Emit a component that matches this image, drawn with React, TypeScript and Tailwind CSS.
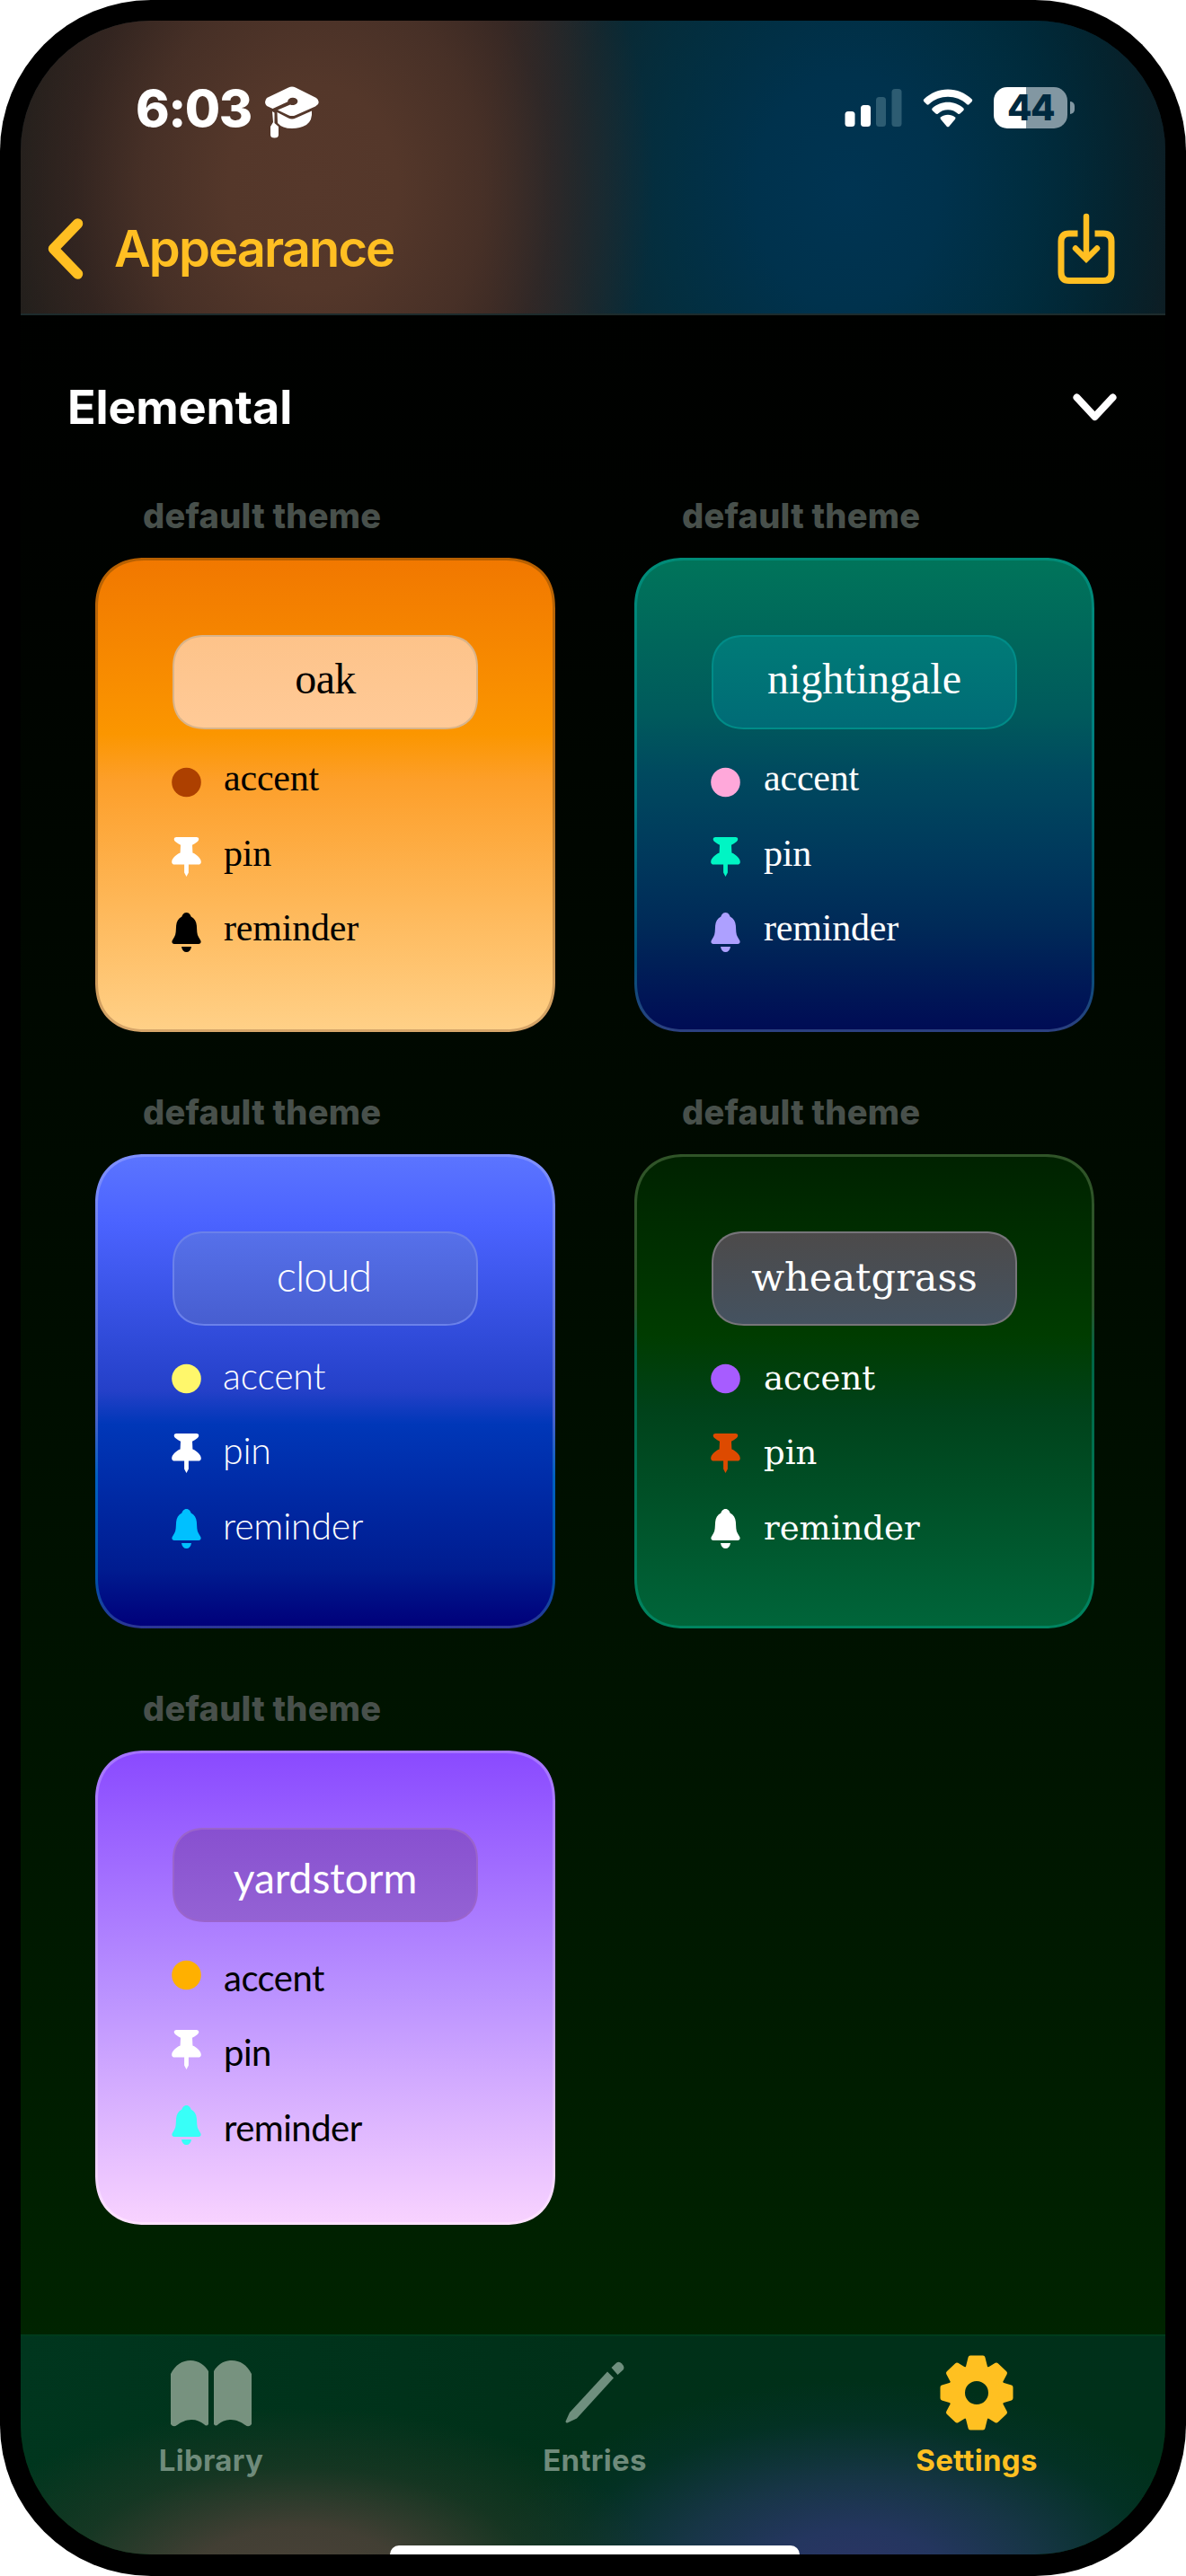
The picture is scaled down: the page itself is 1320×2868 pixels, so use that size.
import type { ReactNode } from 'react';

type Theme = {
  name: string;
  card: string;
  pill: string;
  title: string;
  row: string;
  accent: string;
  pin: string;
  bell: string;
};

const themes: Theme[] = [
  {
    name: 'oak',
    card: '[background:linear-gradient(#f17800,#fb9600_37%,#fd9f2a_47%,#ffd087)_padding-box,linear-gradient(#b86000,#b87420_50%,#d6a66a)_border-box]',
    pill: 'border-[#d9b48a] bg-linear-to-b from-[#fdc38a] to-[#ffca97]',
    title: 'font-["Liberation_Serif",serif] text-[48px] tracking-[-0.600px] text-black pb-[7px]',
    row: 'font-["Liberation_Serif",serif] text-[42px] tracking-[-0.200px] text-black pl-[25px] pb-[9px]',
    accent: 'text-[#ad4000]',
    pin: 'text-white',
    bell: 'text-black',
  },
  {
    name: 'nightingale',
    card: '[background:linear-gradient(#00745a,#005a5c_33%,#004a5f_45%,#00385c_64%,#002a58_78%,#000c55)_padding-box,linear-gradient(#008c78,#007a80_50%,#005078_85%,#2c4080)_border-box]',
    pill: 'border-[#008c88] bg-linear-to-b from-[#007b77] to-[#006b76]',
    title: 'font-["Liberation_Serif",serif] text-[48px] text-white pb-[7px]',
    row: 'font-["Liberation_Serif",serif] text-[42px] tracking-[-0.200px] text-white pl-[26px] pb-[9px]',
    accent: 'text-[#ffa8da]',
    pin: 'text-[#00f5c4]',
    bell: 'text-[#ada0ff]',
  },
  {
    name: 'cloud',
    card: '[background:linear-gradient(#5b74ff,#4b63ff_14%,#2440c8_50%,#0037b8_57%,#001c90_88%,#00007a)_padding-box,linear-gradient(#7f90ff,#4a62cc_55%,#0060c0_68%,#0050a8_90%,#2c3494)_border-box]',
    pill: 'border-[#6b81ea] bg-linear-to-b from-[#5670ea] to-[#475ed0]',
    title: 'font-[Lato,sans-serif] font-light text-[47px] tracking-[-1px] text-white pb-[7px] pr-[3px]',
    row: 'font-[Lato,sans-serif] font-light text-[41px] tracking-[-0.200px] text-white pl-[24px] pb-[6px]',
    accent: 'text-[#fff76b]',
    pin: 'text-white',
    bell: 'text-[#00c0ff]',
  },
  {
    name: 'wheatgrass',
    card: '[background:linear-gradient(#002200,#003c00_38%,#00421a_54%,#00653a)_padding-box,linear-gradient(#305428,#2a5528_32%,#006545_42%,#008460)_border-box]',
    pill: 'border-[#77757a] bg-linear-to-b from-[#4c4a4a] to-[#445260]',
    title: 'font-["DejaVu_Serif",serif] text-[43px] tracking-[0.100px] text-white pb-[3px]',
    row: 'font-["DejaVu_Serif",serif] text-[37px] text-white pl-[26px]',
    accent: 'text-[#a75cff]',
    pin: 'text-[#dd4a00]',
    bell: 'text-white',
  },
  {
    name: 'yardstorm',
    card: '[background:linear-gradient(#8a4aff,#b990ff_50%,#f8d2ff)_padding-box,linear-gradient(#a472ff,#c8a4ff_50%,#ffe2ff)_border-box]',
    pill: 'border-[#9a64cc] bg-linear-to-b from-[#8850d0] to-[#9462d4]',
    title: 'font-[Lato,sans-serif] text-[46px] text-white pt-[7px]',
    row: 'font-[Lato,sans-serif] text-[40px] tracking-[-0.500px] text-black pl-[25px] pt-[6px]',
    accent: 'text-[#ffb000]',
    pin: 'text-white',
    bell: 'text-[#38fff8]',
  },
];

const Dot = () => (
  <svg width="33" height="34" viewBox="0 0 33 34" fill="currentColor">
    <circle cx="16.5" cy="17" r="16.3" />
  </svg>
);

const Pin = () => (
  <svg width="33" height="44" viewBox="0 0 33 44" fill="currentColor">
    <path d="M5.500 0H27.500C31 0 31 3.500 28.500 5.200C26.500 6.600 25 7.800 23 8.800L23.400 17.500C28.500 19.500 32.800 24 32.800 27.800Q32.800 30.600 29.500 30.600H18.900V39.500L16.500 44L14.100 39.500V30.600H3.500Q.2 30.600 .2 27.800C.2 24 4.500 19.500 9.600 17.500L10 8.800C8 7.800 6.500 6.600 4.500 5.200C2 3.500 2 0 5.500 0Z" />
  </svg>
);

const Bell = () => (
  <svg width="33" height="44" viewBox="0 0 33 44" fill="currentColor">
    <path d="M16.500 0C19.500 0 21 2.500 21.600 4.600C25.500 6.600 27.500 10 27.900 14.500C28.300 20 28 24 30 27.300L32.200 31C33.200 33 32.300 35 30 35H3C.7 35-.2 33 .8 31L3 27.300C5 24 4.700 20 5.100 14.500C5.500 10 7.500 6.600 11.400 4.600C12 2.500 13.500 0 16.500 0Z" />
    <path d="M11 38H22C21.300 42 19.300 44 16.500 44C13.700 44 11.700 42 11 38Z" />
  </svg>
);

function Row({ icon, color, text, label }: { icon: ReactNode; color: string; text: string; label: string }) {
  return (
    <div className="flex h-[83.500px] items-center">
      <div className={`w-[33px] ${color}`}>{icon}</div>
      <div className={`leading-[60px] whitespace-nowrap ${text}`}>{label}</div>
    </div>
  );
}

function ThemeCard({ t }: { t: Theme }) {
  return (
    <div className="h-[664px] w-[512px]">
      <div className="h-[76px] pl-[53px] text-[38px] leading-[58px] font-extrabold tracking-[0.250px] text-[#48504b]">
        default theme
      </div>
      <div
        className={`h-[528px] rounded-[50px] border-3 border-transparent px-[83px] pt-[83px] supports-[corner-shape:squircle]:rounded-[56px] [corner-shape:superellipse(1.2)] ${t.card}`}
      >
        <div
          className={`flex h-[105px] w-[340px] items-center justify-center rounded-[31px] border-2 supports-[corner-shape:squircle]:rounded-[36px] [corner-shape:superellipse(1.2)] ${t.pill}`}
        >
          <div className={`leading-[60px] ${t.title}`}>{t.name}</div>
        </div>
        <div className="mt-[17px] -ml-px">
          <Row icon={<Dot />} color={t.accent} text={t.row} label="accent" />
          <Row icon={<Pin />} color={t.pin} text={t.row} label="pin" />
          <Row icon={<Bell />} color={t.bell} text={t.row} label="reminder" />
        </div>
      </div>
    </div>
  );
}

function StatusBar() {
  return (
    <div className="flex h-[140px] items-center pt-[54px] pl-[128px]">
      <div className="w-[129px] pt-[2px] text-[57px] leading-[60px] font-extrabold tracking-[-1.500px] text-white">6:03</div>
      <svg className="mt-[9px] ml-[14px]" width="62" height="58" viewBox="0 0 62 58" fill="#fff">
        <path
          fillRule="evenodd"
          d="M27 1.500Q31 -.7 35 1.500L58 13Q62 16 60 20L57 22.500L35 32.200Q31 34 27 32.200L15 26.500L29 20.500A5.500 4.200 0 1 0 26.300 17.300L9.500 25L3 22Q-1 18 3 13Z"
        />
        <path d="M14.500 29L27 35.500Q31 37.500 35 35.500L53 27.500Q54 38 47 43Q40 47 31 47Q20 47 15 41Z" />
        <path d="M9 28L11.500 29.500V41L16 45V54Q16 57.500 11.500 57.500Q7 57.500 7 54V45L10 40Z" />
      </svg>
      <svg className="ml-[584px]" width="64" height="44" viewBox="0 0 64 44" fill="#fff">
        <rect x=".5" y="26" width="11" height="17" rx="3.500" />
        <rect x="18" y="19" width="11" height="24" rx="3.500" />
        <g fill="#2d5c72">
          <rect x="35" y="10" width="11" height="33" rx="3.500" />
          <rect x="52.500" y="1" width="11" height="42" rx="3.500" />
        </g>
      </svg>
      <svg className="ml-[23px]" width="56" height="43" viewBox="0 0 56 43" fill="#fff">
        <path d="M28 .5C38 .5 47 4.500 54.500 11.200Q56 12.500 54.800 14L51.500 17.200Q50.300 18.200 49 17C43 11.500 36 8.800 28 8.800S13 11.500 7 17Q5.700 18.200 4.500 17.200L1.200 14Q0 12.500 1.500 11.200C9 4.500 18 .5 28 .5Z" />
        <path d="M28 14.800C34.500 14.800 40.500 17.200 45.200 21.300Q46.500 22.600 45.300 23.900L41.500 27.500Q40.200 28.500 39 27.400C36 24.700 32.300 23.200 28 23.200S20 24.700 17 27.400Q15.800 28.500 14.500 27.500L10.700 23.900Q9.500 22.600 10.800 21.300C15.500 17.200 21.500 14.800 28 14.800Z" />
        <path d="M28 28.700C31 28.700 33.700 29.700 36 31.500Q37 32.600 36 33.800L29.300 41.700Q28 43 26.700 41.700L20 33.800Q19 32.600 20 31.500C22.300 29.700 25 28.700 28 28.700Z" />
      </svg>
      <div className="ml-[23px] flex h-[46px] w-[82px] items-center justify-center rounded-[15px] bg-[linear-gradient(90deg,#fff_44%,#8297a2_44%)] text-[40px] leading-[46px] font-extrabold tracking-[-1.500px] text-[#00293f]">
        44
      </div>
      <div className="ml-[2.500px] h-[14px] w-[5px] rounded-r-[6px] bg-[#8297a2]" />
    </div>
  );
}

function Header() {
  return (
    <header className="h-[328px] w-full border-b-2 border-[#1d2b2c] bg-[radial-gradient(ellipse_380px_460px_at_325px_185px,#56382b,#54372a_25%,#4c3228d8_50%,#40292490_70%,#2a221c00),radial-gradient(ellipse_410px_520px_at_920px_190px,#003452,#00324d_25%,#003044d0_50%,#00293790_75%,#01223000),linear-gradient(90deg,#1c1d1a,#2a231d_18%,#2d2520_38%,#222527_48%,#102a30_57%,#00273280_70%,#001f2a_88%,#111a1e)] bg-[#0a1a20]">
      <StatusBar />
      <div className="flex h-[186px] items-center justify-between pt-[42px] pr-[56px] pl-[30px]">
        <div className="flex items-center">
          <svg width="40" height="68" viewBox="0 0 40 68" fill="none" stroke="#ffbf22" strokeWidth="11.500" strokeLinecap="round" strokeLinejoin="round">
            <path d="M33.500 6L6.500 34L33.500 62" />
          </svg>
          <div className="ml-[34px] text-[56px] leading-[64px] font-semibold tracking-[-1.900px] text-[#ffbf22]">Appearance</div>
        </div>
        <svg className="-mt-[1px]" width="64" height="80" viewBox="0 0 64 80" fill="none" stroke="#ffbf22" strokeWidth="7">
          <path d="M22.500 23H13Q4 23 4 32V66Q4 75.500 13 75.500H51Q60 75.500 60 66V32Q60 23 51 23H41.500" />
          <path d="M32 4V50M20 39.500L32 51.500L44 39.500" strokeWidth="6.500" strokeLinecap="round" strokeLinejoin="miter" />
        </svg>
      </div>
    </header>
  );
}

function TabBar() {
  return (
    <footer className="flex h-[245px] flex-col justify-between border-t-2 border-[#003b1c] bg-[radial-gradient(ellipse_400px_190px_at_310px_270px,#4a4238,#423f34_30%,#2a392980_65%,#00331c00),radial-gradient(ellipse_410px_220px_at_930px_270px,#2c3466,#24365f_25%,#1a364ce0_50%,#06322e80_80%,#00312000),linear-gradient(90deg,#00361e,#003018_50%,#00301a)]">
      <div className="flex pt-[20px] text-[33px] leading-[40px] font-bold tracking-[0.300px] text-[#6f8b7b]">
        <div className="flex w-[424px] flex-col items-center">
          <svg className="h-[86px]" width="90" height="86" viewBox="0 0 90 86" fill="#77927f">
            <path d="M0 22C5 12 13 7 22 7S38 12 42 19V78Q40 81 37 78C33 75 29 73 23 73S11 76 7 79Q3 82 0 78Z" />
            <path d="M90 22C85 12 77 7 68 7S52 12 48 19V78Q50 81 53 78C57 75 61 73 67 73S79 76 83 79Q87 82 90 78Z" />
          </svg>
          <div className="mt-[12px]">Library</div>
        </div>
        <div className="flex w-[430px] flex-col items-center">
          <svg width="66" height="86" viewBox="0 0 66 86" fill="#6f8f7e">
            <path d="M47 19.500L54 26.500L13 71.500L2.500 76.500Q0 77 .7 74.500L5 65Z" />
            <path d="M51.500 15L57 9.800Q60 7.500 63 10.500Q67 14.500 64.500 17.500L58.500 23Z" />
          </svg>
          <div className="mt-[12px]">Entries</div>
        </div>
        <div className="flex w-[420px] flex-col items-center text-[#ffc021]">
          <svg width="84" height="86" viewBox="-42 -43 84 86" fill="currentColor">
            <path
              fillRule="evenodd"
              stroke="currentColor"
              strokeWidth="5"
              strokeLinejoin="round"
              d="M-7 -39H7L10 -27L13 -25.500L22 -31L31.500 -22L26.500 -12.500L28 -9L38 -6V6L28 9L26.500 12.500L31.500 22L22 31L13 25.500L10 27L7 39H-7L-10 27L-13 25.500L-22 31L-31.500 22L-26.500 12.500L-28 9L-38 6V-6L-28 -9L-26.500 -12.500L-31.500 -22L-22 -31L-13 -25.500L-10 -27ZM0 -15.500A15.500 15.500 0 1 0 0 15.500A15.500 15.500 0 1 0 0 -15.500Z"
            />
          </svg>
          <div className="mt-[12px]">Settings</div>
        </div>
      </div>
      <div className="ml-[411px] h-[10px] w-[456px] rounded-t-[10px] bg-white" />
    </footer>
  );
}

export default function App() {
  return (
    <div className="h-[2868px] w-[1320px] bg-white font-[Inter,sans-serif]">
      <div className="h-full rounded-[168px] bg-black px-[23px] pt-[23px] pb-[24px]">
        <div className="flex h-full flex-col overflow-hidden rounded-[145px] bg-[linear-gradient(#000,#000200_20%,#000a00_45%,#001400_68%,#002400_92%)]">
          <Header />
          <main className="flex-1">
            <div className="flex h-[194px] items-center justify-between pt-[11px] pr-[54px] pl-[52px]">
              <h1 className="text-[52px] leading-[64px] font-bold tracking-[-0.100px] text-white">Elemental</h1>
              <svg width="49" height="31" viewBox="0 0 49 31" fill="none" stroke="#fff" strokeWidth="8" strokeLinecap="round" strokeLinejoin="round">
                <path d="M4.500 4.500L24.500 26L44.500 4.500" />
              </svg>
            </div>
            <div className="grid grid-cols-[512px_512px] gap-x-[88px] pl-[83px]">
              {themes.map((t) => (
                <ThemeCard key={t.name} t={t} />
              ))}
            </div>
          </main>
          <TabBar />
        </div>
      </div>
    </div>
  );
}
